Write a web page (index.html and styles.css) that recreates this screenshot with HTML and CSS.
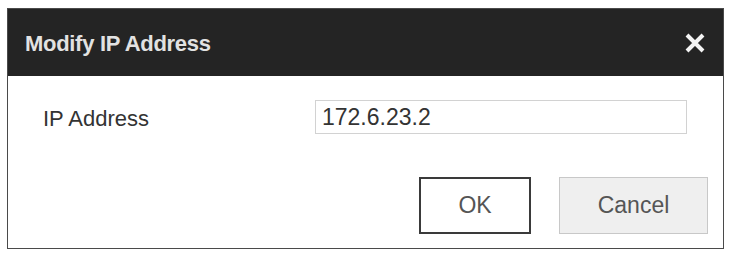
FILE: index.html
```html
<!DOCTYPE html>
<html>
<head>
<meta charset="utf-8">
<link rel="stylesheet" href="styles.css">
</head>
<body>
<div class="dialog">
  <div class="header">
    <span class="title">Modify IP Address</span>
    <svg class="close" width="20" height="20" viewBox="0 0 20 20">
      <path d="M2 2 L18 18 M18 2 L2 18" stroke="#f4f4f4" stroke-width="4" stroke-linecap="butt"/>
    </svg>
  </div>
  <div class="content">
    <div class="row">
      <label class="label">IP Address</label>
      <div class="input">172.6.23.2</div>
    </div>
    <div class="actions">
      <button class="btn btn-ok">OK</button>
      <button class="btn btn-cancel">Cancel</button>
    </div>
  </div>
</div>
</body>
</html>
```

FILE: styles.css
```css
html, body {
  margin: 0;
  padding: 0;
  background: #fff;
}
body {
  font-family: "Liberation Sans", Arial, sans-serif;
  padding: 8px 0 0 7px;
}
.dialog {
  width: 717px;
  height: 241px;
  box-sizing: border-box;
  border: 1px solid #4a4a4a;
  background: #fff;
  display: flex;
  flex-direction: column;
}
.header {
  height: 67px;
  background: #242424;
  display: flex;
  align-items: center;
  justify-content: space-between;
  padding: 3px 18px 0 17px;
  box-sizing: border-box;
  flex-shrink: 0;
}
.title {
  color: #e2e2e2;
  font-weight: bold;
  font-size: 22px;
  letter-spacing: -0.3px;
}
.close {
  display: block;
  margin-top: -2px;
}
.content {
  flex: 1;
  display: flex;
  flex-direction: column;
  padding: 24px 15px 14px 35px;
}
.row {
  display: flex;
  align-items: center;
  height: 34px;
}
.label {
  width: 272px;
  font-size: 22px;
  color: #333;
  padding-top: 4px;
}
.input {
  width: 372px;
  height: 34px;
  box-sizing: border-box;
  border: 1px solid #d2d2d2;
  font-size: 23px;
  color: #333;
  padding: 0 6px;
  display: flex;
  align-items: center;
}
.actions {
  margin-top: auto;
  display: flex;
  justify-content: flex-end;
  gap: 28px;
}
.btn {
  height: 57px;
  font-family: "Liberation Sans", Arial, sans-serif;
  font-size: 23px;
  color: #555;
  box-sizing: border-box;
  padding: 0;
}
.btn-ok {
  width: 112px;
  background: #fff;
  border: 2px solid #3a3a3a;
}
.btn-cancel {
  width: 149px;
  background: #efefef;
  border: 1px solid #c8c8c8;
}
```
